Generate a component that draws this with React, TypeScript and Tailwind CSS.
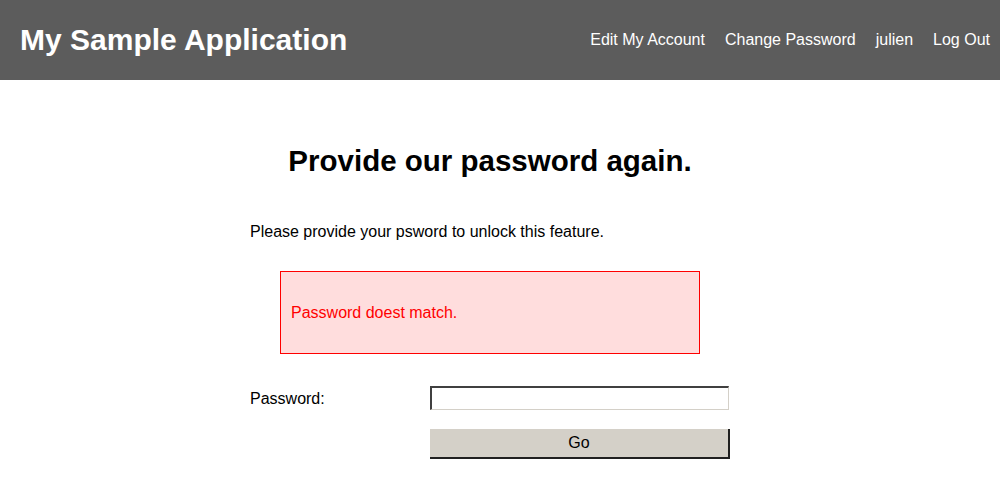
import React from "react";

export default function App() {
  return (
    <div className="min-h-[495px] bg-white text-black" style={{ fontFamily: '"Liberation Sans", Arial, sans-serif' }}>
      <header className="h-[80px] bg-[#5c5c5c] flex items-center justify-between pl-[20px] pr-[10px]">
        <h1 className="text-[30px] font-bold text-white leading-none">My Sample Application</h1>
        <nav className="flex gap-[20px] text-[16px] text-white">
          <span>Edit My Account</span>
          <span>Change Password</span>
          <span>julien</span>
          <span>Log Out</span>
        </nav>
      </header>
      <main className="w-[480px] ml-[250px] pt-[63px]">
        <h2 className="text-[29.5px] leading-[35px] font-bold text-center">Provide our password again.</h2>
        <p className="mt-[44px] text-[16px] leading-[19px]">Please provide your psword to unlock this feature.</p>
        <div className="mt-[30px] ml-[30px] w-[420px] h-[83px] border border-[#ff0000] bg-[#ffdddd] flex items-center px-[10px]">
          <span className="text-[16px] text-[#ff0000] leading-[19px]">Password doest match.</span>
        </div>
        <div className="mt-[32px] flex items-center">
          <label className="w-[180px] text-[16px] leading-[19px]">Password:</label>
          <input
            type="password"
            className="w-[299px] h-[24px] bg-white border-t-2 border-l-2 border-b border-r border-t-[#404040] border-l-[#404040] border-b-[#d4d0c8] border-r-[#d4d0c8] outline-none"
          />
        </div>
        <div className="mt-[19px] ml-[180px]">
          <button className="w-[300px] h-[30px] bg-[#d4d0c8] border-b-2 border-r-2 border-[#202020] text-[16px] text-black">
            Go
          </button>
        </div>
      </main>
    </div>
  );
}
